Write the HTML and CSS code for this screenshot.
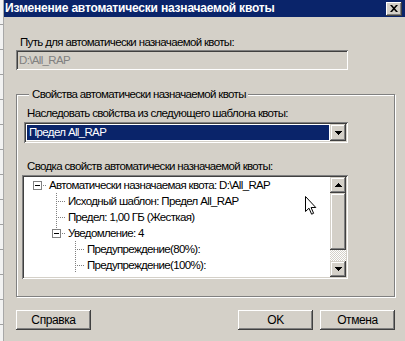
FILE: index.html
```html
<!DOCTYPE html>
<html lang="ru">
<head>
  <meta charset="UTF-8" />
  <title>Изменение автоматически назначаемой квоты</title>
  <link rel="stylesheet" href="styles.css">
</head>
<body>
  <svg class="sprite" xmlns="http://www.w3.org/2000/svg">
    <defs>
      <symbol id="node-root" viewBox="0 0 19 16">
        <rect x="5.5" y="4.5" width="8" height="8" fill="#fff" stroke="#808080" />
        <rect x="7" y="8" width="5" height="1" fill="#000" />
        <path d="M15 8.5H19" stroke="#808080" stroke-dasharray="1 1" />
      </symbol>
      <symbol id="node-open" viewBox="0 0 19 16">
        <path d="M9.5 0V4" stroke="#808080" stroke-dasharray="1 1" />
        <rect x="5.5" y="4.5" width="8" height="8" fill="#fff" stroke="#808080" />
        <rect x="7" y="8" width="5" height="1" fill="#000" />
        <path d="M15 8.5H19" stroke="#808080" stroke-dasharray="1 1" />
      </symbol>
      <symbol id="tee" viewBox="0 0 19 16">
        <path d="M9.5 0V16" stroke="#808080" stroke-dasharray="1 1" />
        <path d="M11 8.5H19" stroke="#808080" stroke-dasharray="1 1" />
      </symbol>
      <symbol id="arrow-up" viewBox="0 0 7 4">
        <path d="M3 0H4V1H5V2H6V3H7V4H0V3H1V2H2V1H3Z" />
      </symbol>
      <symbol id="arrow-down" viewBox="0 0 7 4">
        <path d="M0 0H7V1H6V2H5V3H4V4H3V3H2V2H1V1H0Z" />
      </symbol>
    </defs>
  </svg>

  <div class="screen">
    <div class="side"></div>

    <div class="dialog">
      <div class="titlebar">
        <span class="title">Изменение автоматически назначаемой квоты</span>
        <span class="close">
          <svg width="8" height="7" viewBox="0 0 8 7"><path d="M0 0H2L4 2.3L6 0H8L5 3.5L8 7H6L4 4.7L2 7H0L3 3.5Z" /></svg>
        </span>
      </div>

      <div class="content">
        <div class="label path-label">Путь для автоматически назначаемой квоты:</div>
        <div class="edit">D:\All_RAP</div>

        <fieldset class="group">
          <legend>Свойства автоматически назначаемой квоты</legend>

          <div class="label inherit-label">Наследовать свойства из следующего шаблона квоты:</div>
          <div class="combo">
            <span class="combo-value">Предел All_RAP</span>
            <span class="scroll-btn"><svg width="7" height="4"><use href="#arrow-down" /></svg></span>
          </div>

          <div class="label summary-label">Сводка свойств автоматически назначаемой квоты:</div>
          <div class="list">
            <ul class="tree">
              <li class="row">
                <svg class="cell"><use href="#node-root" /></svg>
                <span>Автоматически назначаемая квота: D:\All_RAP</span>
              </li>
              <li class="row">
                <span class="cell"></span>
                <svg class="cell"><use href="#tee" /></svg>
                <span>Исходный шаблон: Предел All_RAP</span>
              </li>
              <li class="row">
                <span class="cell"></span>
                <svg class="cell"><use href="#tee" /></svg>
                <span>Предел: 1,00 ГБ (Жесткая)</span>
              </li>
              <li class="row">
                <span class="cell"></span>
                <svg class="cell"><use href="#node-open" /></svg>
                <span>Уведомление: 4</span>
              </li>
              <li class="row">
                <span class="cell"></span>
                <span class="cell"></span>
                <svg class="cell"><use href="#tee" /></svg>
                <span>Предупреждение(80%):</span>
              </li>
              <li class="row">
                <span class="cell"></span>
                <span class="cell"></span>
                <svg class="cell"><use href="#tee" /></svg>
                <span>Предупреждение(100%):</span>
              </li>
            </ul>

            <div class="scrollbar">
              <span class="scroll-btn"><svg width="7" height="4"><use href="#arrow-up" /></svg></span>
              <span class="thumb"></span>
              <span class="track"></span>
              <span class="scroll-btn"><svg width="7" height="4"><use href="#arrow-down" /></svg></span>
            </div>
          </div>
        </fieldset>

        <div class="buttons">
          <button class="btn">Справка</button>
          <span class="spacer"></span>
          <button class="btn">OK</button>
          <button class="btn">Отмена</button>
        </div>
      </div>
    </div>
  </div>

  <svg class="cursor" width="12" height="19" viewBox="0 0 12 19">
    <path d="M0.5 0.5V15.5L4 12.2L6.6 18.2L8.6 17.3L6.1 11.5H10.8Z" fill="#fff" stroke="#000" />
  </svg>
</body>
</html>
```

FILE: styles.css
```css
* {
  box-sizing: border-box;
}

body {
  margin: 0;
  font-family: "Liberation Sans", Arial, sans-serif;
  font-size: 11.5px;
  letter-spacing: -0.65px;
  color: #000;
  background: #d4d0c8;
  overflow: hidden;
}

.sprite {
  display: none;
}

.screen {
  display: flex;
  width: 405px;
  height: 341px;
}

/* кусок соседнего окна слева */
.side {
  width: 4px;
  flex: none;
  background: repeating-linear-gradient(to bottom, #f2f2f2 0 24px, #a0a0a0 24px 25px);
  border-right: 1px solid #a8a8a8;
}

.dialog {
  flex: 1;
  background: #d4d0c8;
}

.titlebar {
  height: 17px;
  background: #0a246a;
  display: flex;
  align-items: center;
  justify-content: space-between;
  padding: 0 3px 0 1px;
}

.title {
  color: #fff;
  font-weight: bold;
  font-size: 12px;
  letter-spacing: -0.2px;
  line-height: 17px;
  white-space: nowrap;
}

.close {
  width: 16px;
  height: 14px;
  display: flex;
  align-items: center;
  justify-content: center;
  background: #d4d0c8;
  box-shadow: inset -1px -1px #404040, inset 1px 1px #fff, inset -2px -2px #808080;
}

.content {
  padding: 0 0 0 12px;
}

.label {
  line-height: 14px;
  white-space: nowrap;
}

.path-label {
  margin-top: 18px;
  padding-left: 4px;
}

.edit {
  margin-top: 1px;
  width: 332px;
  height: 20px;
  padding: 3px 0 0 3px;
  line-height: 14px;
  color: #808080;
  background: #d4d0c8;
  box-shadow: inset 1px 1px #808080, inset -1px -1px #fff, inset 2px 2px #404040, inset -2px -2px #d4d0c8;
}

.group {
  margin: 17px 0 0;
  width: 379px;
  padding: 5px 0 17px 5px;
  border: 1px solid #808080;
  box-shadow: 1px 1px 0 #fff, inset 1px 1px 0 #fff;
  min-width: 0;
}

.group legend {
  margin-left: 7px;
  padding: 0 2px 0 3px;
  line-height: 14px;
  background: #d4d0c8;
}

.inherit-label {
  padding-left: 5px;
}

.combo {
  margin: 2px 0 0 2px;
  width: 324px;
  height: 21px;
  display: flex;
  padding: 2px;
  background: #fff;
  box-shadow: inset 1px 1px #808080, inset -1px -1px #fff, inset 2px 2px #404040, inset -2px -2px #d4d0c8;
}

.combo-value {
  flex: 1;
  margin: 1px;
  padding-left: 2px;
  background: #0a246a;
  color: #fff;
  line-height: 15px;
}

.scroll-btn {
  width: 16px;
  height: 16px;
  flex: none;
  display: flex;
  align-items: center;
  justify-content: center;
  background: #d4d0c8;
  box-shadow: inset -1px -1px #404040, inset 1px 1px #d4d0c8, inset -2px -2px #808080, inset 2px 2px #fff;
}

.combo .scroll-btn {
  height: 17px;
}

.summary-label {
  margin-top: 16px;
  padding-left: 5px;
}

.list {
  margin-top: 2px;
  width: 326px;
  height: 104px;
  display: flex;
  padding: 2px;
  background: #fff;
  box-shadow: inset 1px 1px #808080, inset -1px -1px #fff, inset 2px 2px #404040, inset -2px -2px #d4d0c8;
}

.tree {
  flex: 1;
  list-style: none;
  margin: 0;
  padding: 0 0 0 4px;
  overflow: hidden;
}

.row {
  display: flex;
  height: 16px;
  line-height: 16px;
  white-space: nowrap;
}

.row .cell {
  width: 19px;
  height: 16px;
  flex: none;
}

.row span:last-child {
  padding-left: 2px;
}

.scrollbar {
  width: 16px;
  display: flex;
  flex-direction: column;
}

.thumb {
  height: 57px;
  background: #d4d0c8;
  box-shadow: inset -1px -1px #404040, inset 1px 1px #d4d0c8, inset -2px -2px #808080, inset 2px 2px #fff;
}

.track {
  flex: 1;
  background: repeating-conic-gradient(#fff 0 25%, #d4d0c8 0 50%) 0 0 / 2px 2px;
}

.buttons {
  display: flex;
  gap: 7px;
  margin-top: 13px;
  width: 379px;
}

.spacer {
  flex: 1;
}

.btn {
  width: 75px;
  height: 20px;
  padding: 0;
  font: inherit;
  font-size: 12px;
  letter-spacing: -0.4px;
  color: #000;
  background: #d4d0c8;
  border: none;
  box-shadow: inset -1px -1px #404040, inset 1px 1px #fff, inset -2px -2px #808080, inset 2px 2px #d4d0c8;
}

.cursor {
  position: absolute;
  left: 305px;
  top: 196px;
}
```
